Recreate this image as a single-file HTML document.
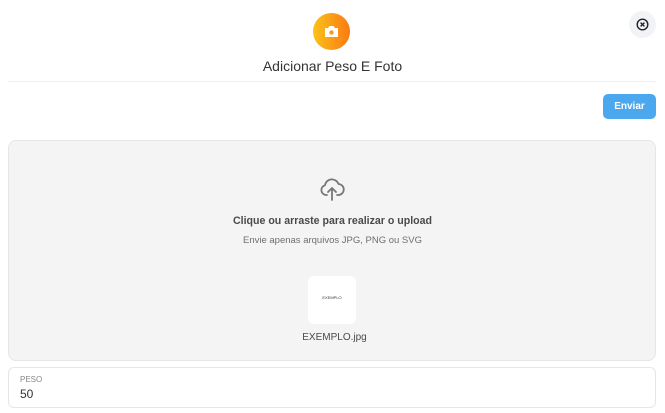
<!DOCTYPE html>
<html><head><meta charset="utf-8"><style>
*{margin:0;padding:0;box-sizing:border-box}
body{width:665px;height:413px;background:#fff;font-family:"Liberation Sans",sans-serif;position:relative;overflow:hidden}
.abs{position:absolute}
</style></head><body>
<div class="abs" style="left:313px;top:13px;width:37px;height:37px;border-radius:50%;background:linear-gradient(90deg,#fbc21a,#f97a14)"></div>
<svg class="abs" style="left:322px;top:22px" width="19" height="19" viewBox="0 0 19 19"><path d="M3 6h3l1.5-2h4L13 6h3v9H3z" fill="#fff"/><circle cx="9.5" cy="10.5" r="2.2" fill="#f99a18"/></svg>
<div class="abs" style="left:629px;top:11px;width:27px;height:27px;border-radius:50%;background:#f1f3f6"></div>
<svg class="abs" style="left:635px;top:17px" width="15" height="15" viewBox="0 0 15 15"><circle cx="7.5" cy="7.5" r="5.3" fill="none" stroke="#222" stroke-width="1.4"/><path d="M5.6 5.6l3.8 3.8M9.4 5.6l-3.8 3.8" stroke="#222" stroke-width="1.4"/></svg>
<div class="abs" style="left:0;width:665px;top:58px;text-align:center;font-size:14px;color:#333">Adicionar Peso E Foto</div>
<div class="abs" style="left:8px;top:81px;width:648px;height:1px;background:#eeeeee"></div>
<div class="abs" style="left:603px;top:94px;width:53px;height:25px;border-radius:5px;background:#4ba8ef;color:#fff;font-size:10px;font-weight:bold;text-align:center;line-height:25px">Enviar</div>
<div class="abs" style="left:8px;top:140px;width:648px;height:221px;border-radius:8px;background:#f4f4f4;border:1px solid #e6e6e6"></div>
<svg class="abs" style="left:318px;top:175px" width="28" height="28" viewBox="0 0 28 28"><path d="M9 20H8a5 5 0 0 1-1-9.8A7 7 0 0 1 20.5 9 5 5 0 0 1 20 20h-1" fill="none" stroke="#777" stroke-width="1.8" stroke-linecap="round" stroke-linejoin="round"/><path d="M14 25V13M10 17l4-4 4 4" fill="none" stroke="#777" stroke-width="1.8" stroke-linecap="round" stroke-linejoin="round"/></svg>
<div class="abs" style="left:0;width:665px;top:215px;text-align:center;font-size:10.6px;font-weight:bold;color:#4a4a4a">Clique ou arraste para realizar o upload</div>
<div class="abs" style="left:0;width:665px;top:235px;text-align:center;font-size:9.5px;color:#6f6f6f">Envie apenas arquivos JPG, PNG ou SVG</div>
<div class="abs" style="left:308px;top:276px;width:48px;height:48px;border-radius:6px;background:#fff;font-size:4px;color:#333;text-align:center;line-height:44px">EXEMPLO</div>
<div class="abs" style="left:0;width:669px;top:332px;text-align:center;font-size:10px;color:#4a4a4a">EXEMPLO.jpg</div>
<div class="abs" style="left:8px;top:367px;width:648px;height:41px;border-radius:6px;border:1px solid #e6e6e6;background:#fff"></div>
<div class="abs" style="left:20px;top:375px;font-size:8px;color:#888">PESO</div>
<div class="abs" style="left:20px;top:387px;font-size:12px;color:#333">50</div>
</body></html>
